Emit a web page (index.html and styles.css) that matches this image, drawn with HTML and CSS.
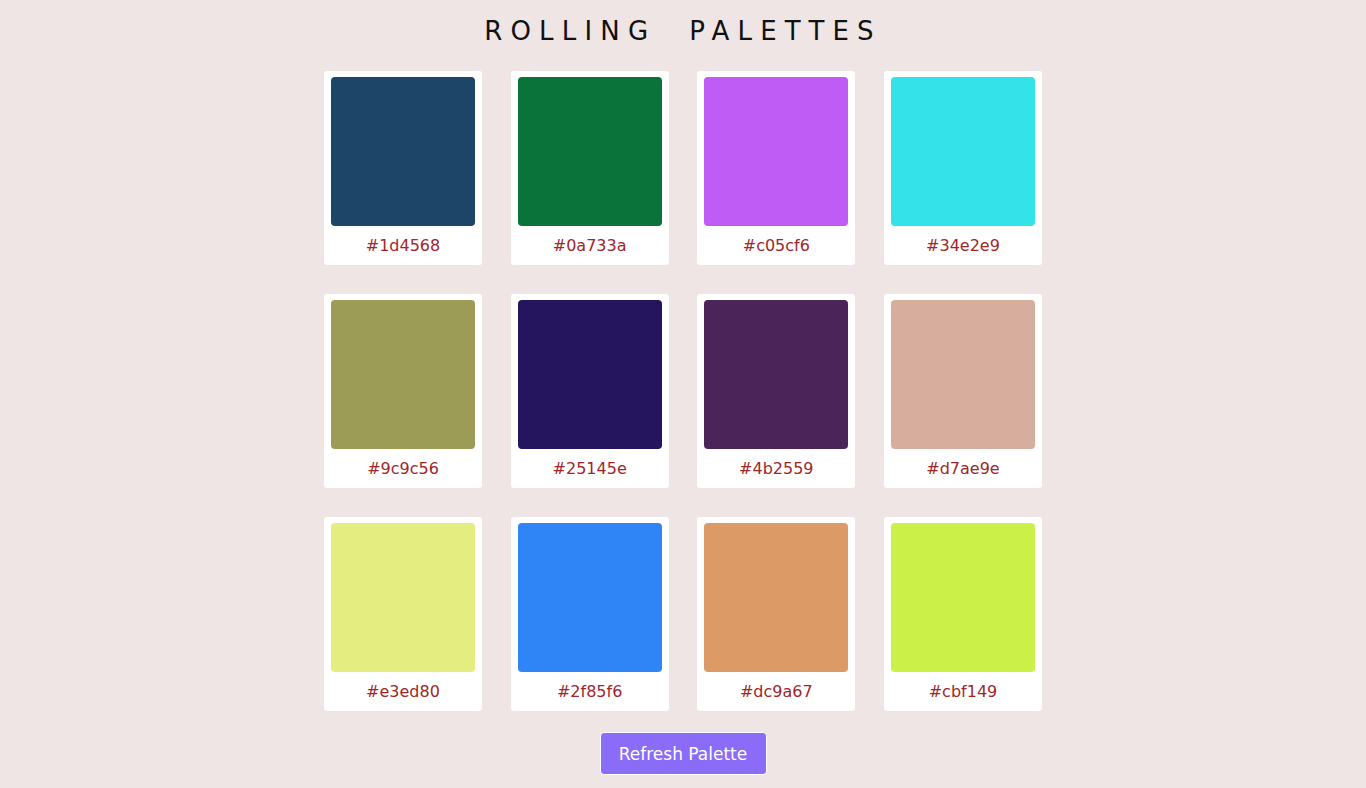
FILE: index.html
```html
<!DOCTYPE html>
<html>
<head>
<meta charset="utf-8">
<link rel="stylesheet" href="styles.css">
</head>
<body>
<h1 class="title">ROLLING&nbsp; PALETTES</h1>
<div class="grid">
  <div class="card"><div class="swatch" style="background:#1d4568"></div><div class="hex">#1d4568</div></div>
  <div class="card"><div class="swatch" style="background:#0a733a"></div><div class="hex">#0a733a</div></div>
  <div class="card"><div class="swatch" style="background:#c05cf6"></div><div class="hex">#c05cf6</div></div>
  <div class="card"><div class="swatch" style="background:#34e2e9"></div><div class="hex">#34e2e9</div></div>
  <div class="card"><div class="swatch" style="background:#9c9c56"></div><div class="hex">#9c9c56</div></div>
  <div class="card"><div class="swatch" style="background:#25145e"></div><div class="hex">#25145e</div></div>
  <div class="card"><div class="swatch" style="background:#4b2559"></div><div class="hex">#4b2559</div></div>
  <div class="card"><div class="swatch" style="background:#d7ae9e"></div><div class="hex">#d7ae9e</div></div>
  <div class="card"><div class="swatch" style="background:#e3ed80"></div><div class="hex">#e3ed80</div></div>
  <div class="card"><div class="swatch" style="background:#2f85f6"></div><div class="hex">#2f85f6</div></div>
  <div class="card"><div class="swatch" style="background:#dc9a67"></div><div class="hex">#dc9a67</div></div>
  <div class="card"><div class="swatch" style="background:#cbf149"></div><div class="hex">#cbf149</div></div>
</div>
<div class="actions"><button class="refresh">Refresh Palette</button></div>
</body>
</html>
```
FILE: styles.css
```css
html, body {
  margin: 0;
  padding: 0;
  background: #efe5e4;
  font-family: "DejaVu Sans", "Noto Sans", sans-serif;
}
.title {
  margin: 0;
  padding-top: 15px;
  height: 56px;
  box-sizing: border-box;
  text-align: center;
  font-weight: 400;
  font-size: 26px;
  letter-spacing: 8.2px;
  color: #111;
  line-height: 32px;
}
.grid {
  width: 718px;
  margin: 15px auto 0;
  display: grid;
  grid-template-columns: repeat(4, 158px);
  column-gap: 28.67px;
  row-gap: 29px;
}
.card {
  background: #fff;
  border-radius: 3px;
  padding: 6px 7px 0;
  height: 194px;
  box-sizing: border-box;
}
.swatch {
  width: 144px;
  height: 149px;
  border-radius: 4px;
}
.hex {
  text-align: center;
  color: #a0262a;
  font-size: 16px;
  line-height: 20px;
  padding-top: 10px;
}
.actions {
  display: flex;
  justify-content: center;
  margin-top: 21px;
}
.refresh {
  width: 167px;
  height: 43px;
  background: #8b6cf9;
  color: #fff;
  border: 1px solid #fff;
  border-radius: 4px;
  font-family: "DejaVu Sans", "Noto Sans", sans-serif;
  font-size: 17px;
  padding: 0;
  cursor: pointer;
}
```
